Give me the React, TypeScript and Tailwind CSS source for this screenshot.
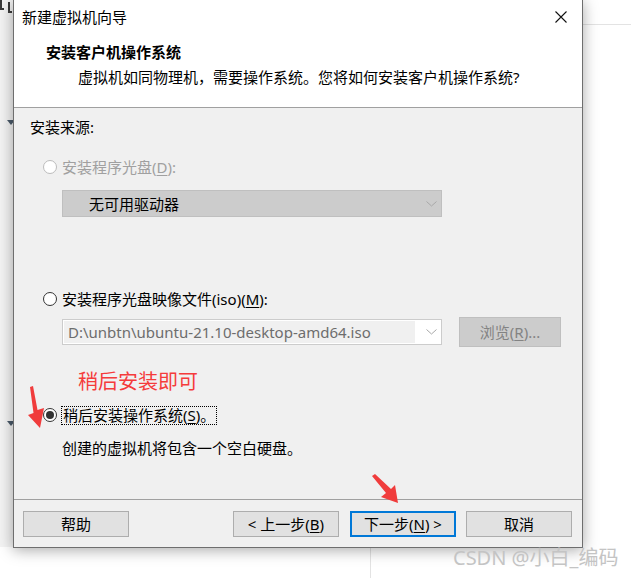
import React from "react";

function Radio({ state }: { state: "disabled" | "off" | "on" }) {
  const border = state === "disabled" ? "border-[#bcbcbc]" : "border-[#333333]";
  return (
    <span
      className={`flex h-[14px] w-[14px] shrink-0 items-center justify-center rounded-full border bg-white ${border}`}
    >
      {state === "on" && <span className="h-[8px] w-[8px] rounded-full bg-[#333333]" />}
    </span>
  );
}

function Chevron() {
  return (
    <svg width="11" height="6" viewBox="0 0 11 6">
      <polyline points="0.5,0.5 5.5,5 10.5,0.5" fill="none" stroke="#a8a8a8" strokeWidth="1" />
    </svg>
  );
}

function U({ children }: { children: React.ReactNode }) {
  return <span className="underline underline-offset-2">{children}</span>;
}

function Btn({ children, primary }: { children: React.ReactNode; primary?: boolean }) {
  return (
    <div
      className={`flex h-[26px] w-[106px] items-center justify-center bg-[#e1e1e1] text-[15px] leading-[20px] text-black ${
        primary ? "border-2 border-[#0078d7]" : "border border-[#adadad]"
      }`}
    >
      {children}
    </div>
  );
}

export default function App() {
  return (
    <div className="relative h-[578px] w-[631px] overflow-hidden bg-white font-['Noto_Sans','Noto_Sans_CJK_SC',sans-serif] text-black">
      {/* desktop background pieces */}
      <div className="absolute left-0 top-0 h-[547px] w-[13px] bg-[#f3f3f3]" />
      <div className="absolute left-[583px] top-[24px] h-px w-[48px] bg-[#e3e3e3]" />
      <div className="absolute left-[370px] top-[547px] h-[31px] w-px bg-[#e3e3e3]" />
      <svg className="absolute left-0 top-0" width="12" height="14" viewBox="0 0 12 14">
        <path d="M1 0 V9 H4" fill="none" stroke="#3a3a3a" strokeWidth="2" />
        <path d="M9 2 V12 H12" fill="none" stroke="#3a3a3a" strokeWidth="2" />
      </svg>
      <svg className="absolute left-[7px] top-[120px]" width="8" height="6" viewBox="0 0 8 6">
        <polygon points="0,0 8,0 4,5" fill="#4a5a6a" />
      </svg>
      <svg className="absolute left-[7px] top-[421px]" width="8" height="6" viewBox="0 0 8 6">
        <polygon points="0,0 8,0 4,5" fill="#4a5a6a" />
      </svg>

      {/* dialog window */}
      <div className="relative z-10 ml-[13px] flex h-[548px] w-[570px] flex-col border-x border-b border-[#6e6e6e] bg-white shadow-[0_2px_14px_rgba(0,0,0,0.35)]">
        {/* header */}
        <div className="h-[108px] shrink-0 border-b border-[#a0a0a0] bg-white">
          <div className="flex h-[34px] items-center justify-between pl-[8px] pr-[15px]">
            <span className="text-[15px] leading-[20px]">新建虚拟机向导</span>
            <svg width="12" height="12" viewBox="0 0 12 12">
              <path d="M0.5 0.5 L11.5 11.5 M11.5 0.5 L0.5 11.5" stroke="#111" strokeWidth="1.1" />
            </svg>
          </div>
          <div className="mt-[8px] pl-[32px] text-[15px] font-bold leading-[20px]">安装客户机操作系统</div>
          <div className="mt-[5px] pl-[64px] text-[15px] leading-[20px]">
            虚拟机如同物理机，需要操作系统。您将如何安装客户机操作系统?
          </div>
        </div>

        {/* body */}
        <div className="flex h-[391px] shrink-0 flex-col bg-[#f0f0f0] text-[15px] leading-[20px]">
          <div className="mt-[9px] h-[20px] pl-[16px]">安装来源:</div>

          <div className="mt-[20px] flex h-[20px] items-center gap-[5px] pl-[29px] text-[#a0a0a0]">
            <Radio state="disabled" />
            <span>
              安装程序光盘(<U>D</U>):
            </span>
          </div>

          <div className="ml-[48px] mt-[13px] flex h-[27px] w-[380px] items-center justify-between border border-[#bfbfbf] bg-[#cccccc] pl-[26px] pr-[4px]">
            <span>无可用驱动器</span>
            <Chevron />
          </div>

          <div className="mt-[72px] flex h-[20px] items-center gap-[5px] pl-[29px]">
            <Radio state="off" />
            <span>
              安装程序光盘映像文件(iso)(<U>M</U>):
            </span>
          </div>

          <div className="mt-[8px] flex h-[30px] items-center">
            <div className="ml-[48px] flex h-[26px] w-[380px] items-center border border-[#cccccc] bg-white p-px pr-[4px]">
              <div className="flex h-full flex-1 items-center bg-[#f0f0f0] pl-[4px] text-[#6d6d6d]">
                D:\unbtn\ubuntu-21.10-desktop-amd64.iso
              </div>
              <div className="flex w-[22px] justify-end">
                <Chevron />
              </div>
            </div>
            <div className="ml-[17px] flex h-[30px] w-[102px] items-center justify-center border border-[#bfbfbf] bg-[#cccccc] text-[#838383]">
              浏览(<U>R</U>)...
            </div>
          </div>

          <div className="mt-[22px] h-[26px] pl-[64px] text-[20px] leading-[26px] text-[#f53b3b]">稍后安装即可</div>

          <div className="mt-[10px] flex h-[20px] items-center gap-[4px] pl-[29px]">
            <Radio state="on" />
            <span className="flex h-[19px] items-center border border-dotted border-black px-[1px]">
              稍后安装操作系统(<U>S</U>)。
            </span>
          </div>

          <div className="mt-[13px] h-[20px] pl-[48px]">创建的虚拟机将包含一个空白硬盘。</div>
        </div>

        {/* footer */}
        <div className="flex flex-1 items-start border-t border-[#a0a0a0] bg-[#f0f0f0] pl-[9px] pr-[10px] pt-[11px]">
          <Btn>帮助</Btn>
          <div className="ml-auto flex gap-[11px]">
            <Btn>
              &lt; 上一步(<U>B</U>)
            </Btn>
            <div className="flex gap-[10px]">
              <Btn primary>
                下一步(<U>N</U>) &gt;
              </Btn>
              <Btn>取消</Btn>
            </div>
          </div>
        </div>
      </div>

      {/* annotation arrows */}
      <svg className="pointer-events-none absolute left-0 top-0 z-20" width="631" height="578" viewBox="0 0 631 578">
        <polygon points="30,387 33,386 37.5,410 44,408 40,428 28,415 33.5,413" fill="#f03c3c" />
        <polygon points="372,476 375,474 391,489 395,485 398,503 381,497 386,493" fill="#f03c3c" />
      </svg>

      {/* watermark */}
      <div className="absolute left-[453px] top-[545px] z-20 text-[20px] leading-[26px] text-[#c4c4c4]">
        CSDN @小白_编码
      </div>
    </div>
  );
}
